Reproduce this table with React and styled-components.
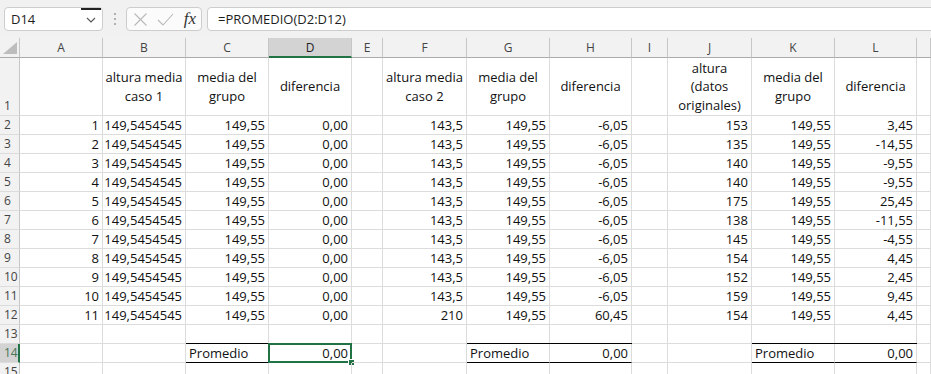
import React from "react";
import styled, { createGlobalStyle, css } from "styled-components";

const Global = createGlobalStyle`
  html, body { margin: 0; padding: 0; background: #fff; overflow: hidden; }
  body { font-family: "Open Sans", "Liberation Sans", sans-serif; }
`;

const GREEN = "#217346";
const GRID = "#dcdcdc";
const HEAD_LINE = "#c6c6c6";

const Window = styled.div`
  width: 931px;
  height: 374px;
  overflow: hidden;
  display: flex;
  flex-direction: column;
  background: #fff;
`;

/* ---------- formula bar ---------- */
const FormulaBar = styled.div`
  height: 38px;
  flex: none;
  box-sizing: border-box;
  padding: 7px 0 7px 4px;
  display: flex;
  align-items: stretch;
  background: #f1f1f1;
`;

const Box = styled.div`
  box-sizing: border-box;
  background: #fff;
  border: 1px solid #cdcdcd;
  border-radius: 4px;
  display: flex;
  align-items: center;
`;

const NameBox = styled(Box)`
  width: 99px;
  padding-left: 6px;
  justify-content: space-between;
  position: relative;
  font-size: 13px;
  color: #1e1e1e;
`;

const NameCaret = styled.div`
  width: 20px;
  height: 100%;
  display: flex;
  align-items: center;
  justify-content: center;
  border-top: 2px solid #222;
  box-sizing: border-box;
  margin-right: 1px;
  margin-top: -1px;
`;

const Grip = styled.div`
  width: 23px;
  display: flex;
  flex-direction: column;
  align-items: center;
  justify-content: center;
  gap: 3px;
  & > span {
    width: 2px;
    height: 2px;
    border-radius: 1px;
    background: #9a9a9a;
  }
`;

const Actions = styled(Box)`
  width: 76px;
  padding: 0 5px 0 6px;
  justify-content: space-between;
  background: #fbfbfb;
`;

const Fx = styled.span`
  font-family: "Liberation Serif", "DejaVu Serif", serif;
  font-style: italic;
  font-size: 17px;
  color: #333;
  line-height: 1;
  margin-top: -2px;
`;

const FormulaInput = styled(Box)`
  flex: 1;
  margin-left: 5px;
  margin-right: -6px;
  padding-left: 10px;
  font-size: 13px;
  color: #1e1e1e;
`;

/* ---------- sheet ---------- */
const Sheet = styled.div`
  display: grid;
  grid-template-columns: 20px 83px 83px 83px 83px 31px 84px 83px 82px 36px 84px 83px 82px 1fr;
  grid-template-rows: 20px 58px repeat(14, 19px);
  color: #111;
`;

const headBase = css`
  box-sizing: border-box;
  background: #f2f2f2;
  color: #444;
  font-size: 12px;
  display: flex;
`;

const Corner = styled.div`
  ${headBase};
  border-right: 1px solid ${HEAD_LINE};
  border-bottom: 1px solid #ababab;
  align-items: flex-end;
  justify-content: flex-end;
  padding: 0 2px 3px 0;
`;

const ColHead = styled.div`
  ${headBase};
  align-items: center;
  justify-content: center;
  border-right: 1px solid ${HEAD_LINE};
  border-bottom: 1px solid #ababab;
  ${(p) =>
    p.$active &&
    css`
      background: #d3d3d3;
      color: #1e1e1e;
      border-bottom: 2px solid ${GREEN};
      padding-top: 1px;
    `}
`;

const RowHead = styled.div`
  ${headBase};
  align-items: flex-end;
  padding: 0 0 0 4px;
  line-height: 18px;
  border-right: 1px solid ${HEAD_LINE};
  border-bottom: 1px solid ${GRID};
  ${(p) =>
    p.$active &&
    css`
      background: #d3d3d3;
      color: #4a7456;
      border-right: 2px solid ${GREEN};
    `}
`;

const Cell = styled.div`
  box-sizing: border-box;
  position: relative;
  border-right: 1px solid ${GRID};
  border-bottom: 1px solid ${GRID};
  padding: 0 3px;
  font-size: 13px;
  line-height: 17px;
  white-space: nowrap;
  display: flex;
  align-items: flex-end;
  justify-content: ${(p) => (p.$align === "left" ? "flex-start" : "flex-end")};
  ${(p) =>
    p.$wrap &&
    css`
      padding: 0;
      align-items: center;
      justify-content: center;
      text-align: center;
      line-height: 18.5px;
    `}
  ${(p) =>
    p.$boxed &&
    css`
      border-bottom-color: #000;
      box-shadow: 0 -1px 0 #000;
    `}
  ${(p) =>
    p.$selected &&
    css`
      &::before {
        content: "";
        position: absolute;
        left: -1px;
        top: -1px;
        right: -1px;
        bottom: -1px;
        border: 2px solid ${GREEN};
        pointer-events: none;
      }
      &::after {
        content: "";
        position: absolute;
        right: -4px;
        bottom: -4px;
        width: 5px;
        height: 5px;
        background: ${GREEN};
        border: 1px solid #fff;
      }
    `}
`;

const LETTERS = ["A", "B", "C", "D", "E", "F", "G", "H", "I", "J", "K", "L", ""];

const HEADINGS = {
  B: ["altura media", "caso 1"],
  C: ["media del", "grupo"],
  D: ["diferencia"],
  F: ["altura media", "caso 2"],
  G: ["media del", "grupo"],
  H: ["diferencia"],
  J: ["altura", "(datos", "originales)"],
  K: ["media del", "grupo"],
  L: ["diferencia"],
};

const ORIGINAL = [153, 135, 140, 140, 175, 138, 145, 154, 152, 159, 154];
const DIFF = ["3,45", "-14,55", "-9,55", "-9,55", "25,45", "-11,55", "-4,55", "4,45", "2,45", "9,45", "4,45"];

function dataRow(i) {
  const last = i === 10;
  return {
    A: String(i + 1),
    B: "149,5454545",
    C: "149,55",
    D: "0,00",
    F: last ? "210" : "143,5",
    G: "149,55",
    H: last ? "60,45" : "-6,05",
    J: String(ORIGINAL[i]),
    K: "149,55",
    L: DIFF[i],
  };
}

const SUMMARY = {
  C: { v: "Promedio", left: true, boxed: true },
  D: { v: "0,00", boxed: true, selected: true },
  G: { v: "Promedio", left: true, boxed: true },
  H: { v: "0,00", boxed: true },
  K: { v: "Promedio", left: true, boxed: true },
  L: { v: "0,00", boxed: true },
};

function Chevron() {
  return (
    <svg width="10" height="6" viewBox="0 0 10 6">
      <path d="M1 1 L5 5 L9 1" fill="none" stroke="#555" strokeWidth="1.1" />
    </svg>
  );
}

function CrossIcon() {
  return (
    <svg width="15" height="15" viewBox="0 0 15 15">
      <path d="M1.5 1.5 L13.5 13.5 M13.5 1.5 L1.5 13.5" stroke="#b9b9b9" strokeWidth="1.1" fill="none" />
    </svg>
  );
}

function CheckIcon() {
  return (
    <svg width="17" height="13" viewBox="0 0 17 13">
      <path d="M1 7 L6 12 L16 1" stroke="#b9b9b9" strokeWidth="1.1" fill="none" />
    </svg>
  );
}

function SelectAll() {
  return (
    <svg width="14" height="12" viewBox="0 0 14 12">
      <path d="M0 12 L14 12 L14 0 Z" fill="#bdbdbd" />
    </svg>
  );
}

export default function App() {
  const rows = [];
  // header row 1
  rows.push(
    <React.Fragment key="r1">
      <RowHead>1</RowHead>
      {LETTERS.map((l, c) => (
        <Cell key={c} $wrap>
          {HEADINGS[l] &&
            HEADINGS[l].map((line, k) => (
              <React.Fragment key={k}>
                {k > 0 && <br />}
                {line}
              </React.Fragment>
            ))}
        </Cell>
      ))}
    </React.Fragment>
  );
  // data rows 2-12
  for (let i = 0; i < 11; i++) {
    const d = dataRow(i);
    rows.push(
      <React.Fragment key={"d" + i}>
        <RowHead>{i + 2}</RowHead>
        {LETTERS.map((l, c) => (
          <Cell key={c}>{d[l] || ""}</Cell>
        ))}
      </React.Fragment>
    );
  }
  // empty row 13
  rows.push(
    <React.Fragment key="r13">
      <RowHead>13</RowHead>
      {LETTERS.map((l, c) => (
        <Cell key={c} />
      ))}
    </React.Fragment>
  );
  // summary row 14
  rows.push(
    <React.Fragment key="r14">
      <RowHead $active>14</RowHead>
      {LETTERS.map((l, c) => {
        const s = SUMMARY[l];
        return (
          <Cell
            key={c}
            $align={s && s.left ? "left" : "right"}
            $boxed={s && s.boxed}
            $selected={s && s.selected}
          >
            {s ? s.v : ""}
          </Cell>
        );
      })}
    </React.Fragment>
  );
  // row 15
  rows.push(
    <React.Fragment key="r15">
      <RowHead>15</RowHead>
      {LETTERS.map((l, c) => (
        <Cell key={c} />
      ))}
    </React.Fragment>
  );

  return (
    <Window>
      <Global />
      <FormulaBar>
        <NameBox>
          <span>D14</span>
          <NameCaret>
            <Chevron />
          </NameCaret>
        </NameBox>
        <Grip>
          <span />
          <span />
          <span />
        </Grip>
        <Actions>
          <CrossIcon />
          <CheckIcon />
          <Fx>fx</Fx>
        </Actions>
        <FormulaInput>=PROMEDIO(D2:D12)</FormulaInput>
      </FormulaBar>
      <Sheet>
        <Corner>
          <SelectAll />
        </Corner>
        {LETTERS.map((l, c) => (
          <ColHead key={c} $active={l === "D"}>
            {l}
          </ColHead>
        ))}
        {rows}
      </Sheet>
    </Window>
  );
}
